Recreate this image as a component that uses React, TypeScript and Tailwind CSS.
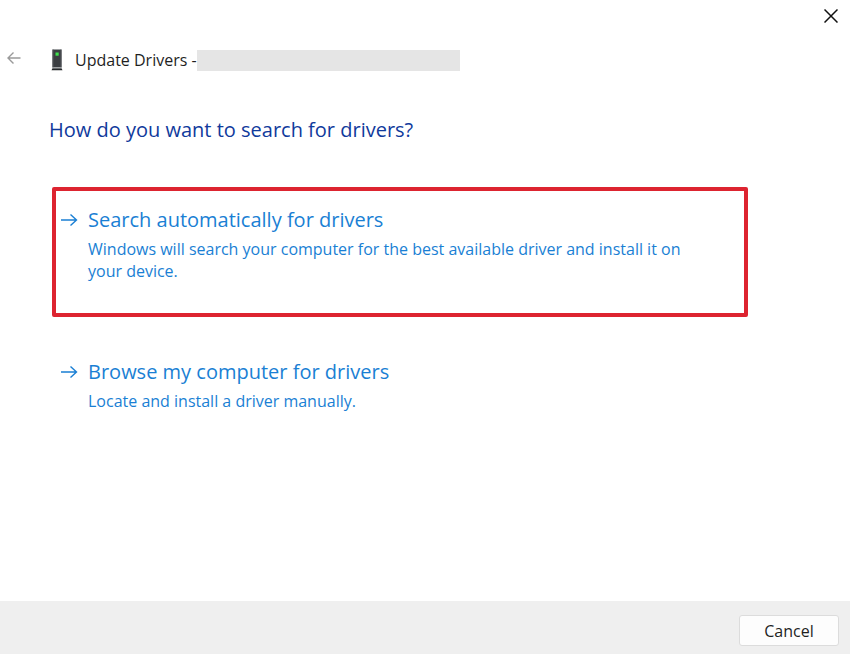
import React from "react";

const ArrowRight = () => (
  <svg viewBox="0 0 18 16" className="mt-2 h-4 w-[18px] shrink-0" fill="none" stroke="currentColor" strokeWidth="1.4">
    <path d="M1 8H16.5M10.5 2.5L16.5 8L10.5 13.5" />
  </svg>
);

type OptionProps = { title: string; text: string; className: string };

const Option = ({ title, text, className }: OptionProps) => (
  <button type="button" className={`flex items-start gap-[10px] text-left text-[#1a7fd4] ${className}`}>
    <ArrowRight />
    <span className="block">
      <span className="block text-[20px] leading-8">{title}</span>
      <span className="mt-[2px] block max-w-[600px] text-[16px] leading-[22px]">{text}</span>
    </span>
  </button>
);

const App = () => {
  return (
    <div className="flex min-h-screen flex-col bg-white font-['Open_Sans',sans-serif] text-[#1f1f1f]">
      <div className="flex justify-end px-3 pt-2">
        <button type="button" aria-label="Close" className="flex h-4 w-[14px] items-center justify-center">
          <svg viewBox="0 0 14 14" className="size-[14px] shrink-0" fill="none" stroke="#111" strokeWidth="1.5">
            <path d="M0.5 0.5L13.5 13.5M13.5 0.5L0.5 13.5" />
          </svg>
        </button>
      </div>

      <header className="mt-6 flex items-center pl-[7px]">
        <button type="button" aria-label="Back" className="mb-1 text-[#9a9a9a]">
          <svg viewBox="0 0 14 12" className="h-3 w-[14px]" fill="none" stroke="currentColor" strokeWidth="1.4">
            <path d="M13.5 6H1M6.5 0.5L1 6L6.5 11.5" />
          </svg>
        </button>
        <svg viewBox="0 0 12 22" className="ml-[30px] h-[22px] w-3">
          <path d="M1.5 0.5h9v18h-9z" fill="#3b3e42" />
          <path d="M1.5 0.5h1v18h-1zM9.5 0.5h1v18h-1z" fill="#54575b" />
          <path d="M1.5 19.2h9l1 2h-11z" fill="#25282b" />
          <path d="M2 18.5h8v0.7h-8z" fill="#a5a8aa" />
          <path d="M4.5 3.5h3.2v3.2h-3.2z" fill="#3fe04c" />
        </svg>
        <span className="ml-3 text-[16px] leading-6">Update Drivers -</span>
        <span className="h-[21px] w-[263px] bg-[#e5e5e5]" />
      </header>

      <main className="flex-1 pr-[102px] pl-[49px]">
        <h1 className="mt-[42px] text-[20px] leading-8 text-[#103a9c]">How do you want to search for drivers?</h1>
        <div className="ml-[3px]">
          <Option
            className="mt-[41px] min-h-[130px] w-full rounded-[2px] border-4 border-[#dd2430] pt-[13px] pl-1"
            title="Search automatically for drivers"
            text="Windows will search your computer for the best available driver and install it on your device."
          />
          <Option
            className="mt-[39px] pl-2"
            title="Browse my computer for drivers"
            text="Locate and install a driver manually."
          />
        </div>
      </main>

      <footer className="flex justify-end bg-[#efefef] px-[11px] pt-[14px] pb-2">
        <button
          type="button"
          className="h-[31px] w-[100px] rounded-[3px] border border-[#dcdcdc] bg-[#fdfdfd] text-[16px] leading-6"
        >
          Cancel
        </button>
      </footer>
    </div>
  );
};

export default App;
